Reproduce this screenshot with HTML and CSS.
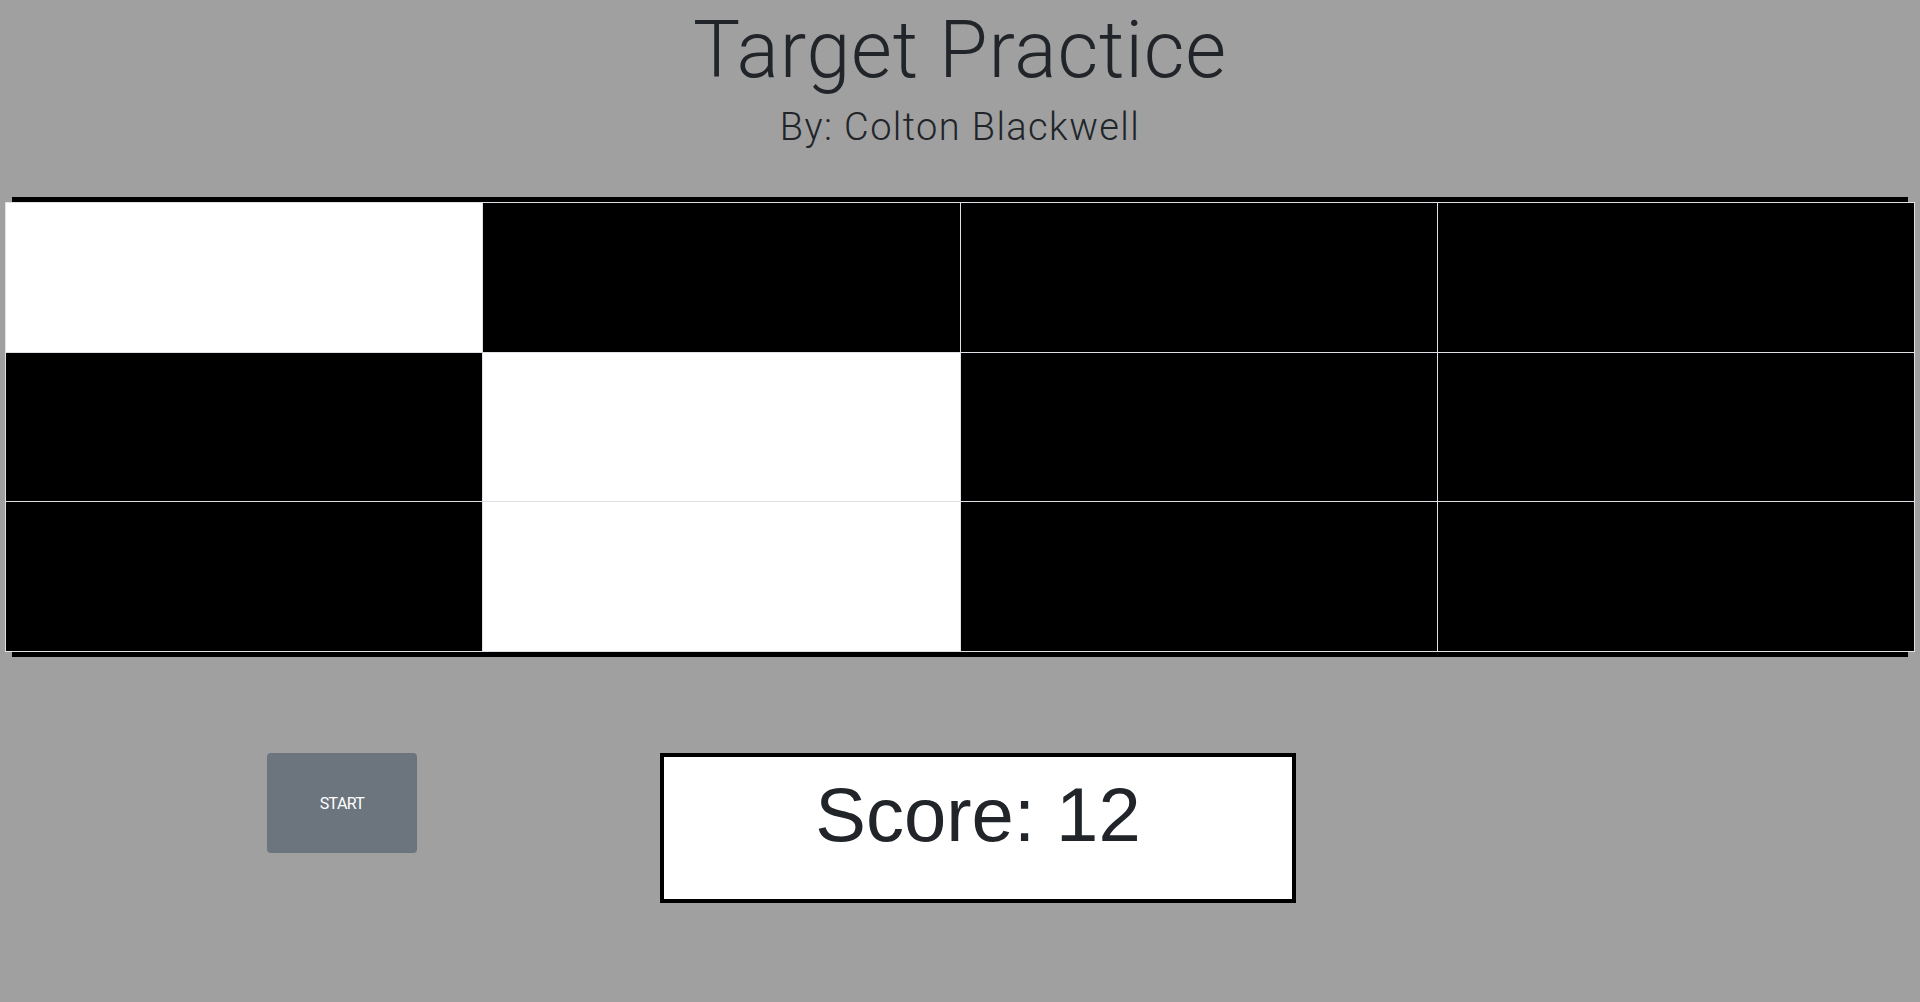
FILE: index.html
```html
<!DOCTYPE html>
<html lang="en">
<head>
<meta charset="utf-8">
<title>Target Practice</title>
<link rel="stylesheet" href="styles.css">
</head>
<body>
<header class="header">
  <h1 class="title">Target Practice</h1>
  <h2 class="subtitle">By: Colton Blackwell</h2>
</header>
<main class="board">
  <div class="board-bar"></div>
  <div class="grid">
    <div class="cell on"></div>
    <div class="cell"></div>
    <div class="cell"></div>
    <div class="cell"></div>
    <div class="cell"></div>
    <div class="cell on"></div>
    <div class="cell"></div>
    <div class="cell"></div>
    <div class="cell"></div>
    <div class="cell on"></div>
    <div class="cell"></div>
    <div class="cell"></div>
  </div>
  <div class="board-bar"></div>
</main>
<section class="controls">
  <button class="start-btn" type="button">START</button>
  <div class="score-box">Score: 12</div>
</section>
</body>
</html>
```
FILE: styles.css
```css
html, body {
  margin: 0;
  padding: 0;
}
body {
  background: #a0a0a0;
  color: #212529;
  font-family: Roboto, "Liberation Sans", sans-serif;
  min-height: 1002px;
}
.header {
  display: flex;
  flex-direction: column;
  align-items: center;
  padding-top: 11px;
}
.title {
  margin: 0;
  font-family: Roboto, sans-serif;
  font-weight: 300;
  font-size: 79px;
  line-height: 79px;
  letter-spacing: 0.8px;
  color: #212529;
}
.subtitle {
  margin: 18px 0 0;
  font-family: Roboto, sans-serif;
  font-weight: 300;
  font-size: 38px;
  line-height: 38px;
  letter-spacing: 1.4px;
  color: #212529;
}
.board {
  display: flex;
  flex-direction: column;
  margin-top: 51px;
}
.board-bar {
  height: 5px;
  background: #000;
  margin: 0 12px;
}
.grid {
  margin: 0 5px;
  height: 450px;
  box-sizing: border-box;
  display: grid;
  grid-template-columns: repeat(4, 1fr);
  grid-template-rows: repeat(3, 1fr);
  gap: 1px;
  padding: 1px;
  background: #dee2e6;
}
.cell {
  background: #000;
}
.cell.on {
  background: #fff;
}
.controls {
  display: flex;
  align-items: flex-start;
  margin-top: 96px;
  padding-left: 267px;
  gap: 243px;
}
.start-btn {
  width: 150px;
  height: 100px;
  background: #6c757d;
  border: none;
  border-radius: 4px;
  color: #fff;
  font-family: Roboto, sans-serif;
  font-size: 16px;
  letter-spacing: -0.6px;
  padding: 0;
  display: flex;
  align-items: center;
  justify-content: center;
}
.score-box {
  width: 636px;
  height: 150px;
  box-sizing: border-box;
  border: 4px solid #000;
  background: #fff;
  font-family: "Liberation Sans", Arial, sans-serif;
  font-size: 76px;
  line-height: 84px;
  padding-top: 16px;
  text-align: center;
  color: #212529;
}
```
